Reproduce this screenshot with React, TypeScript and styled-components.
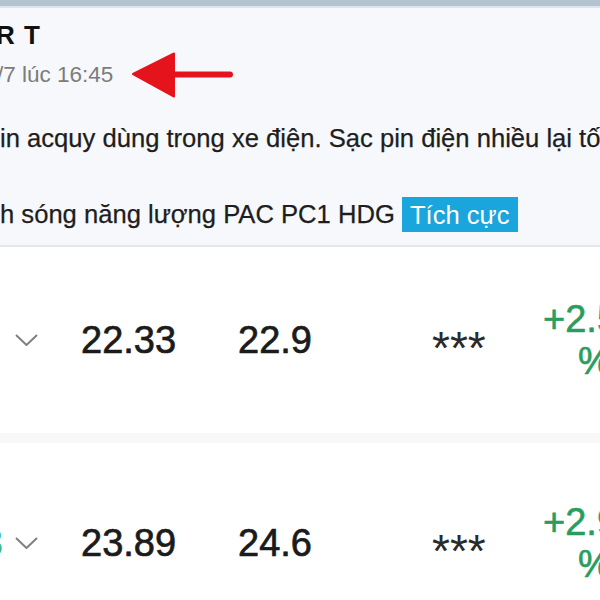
import React from "react";
import styled, { createGlobalStyle } from "styled-components";

const GlobalStyle = createGlobalStyle`
  html, body {
    margin: 0;
    padding: 0;
    background: #ffffff;
    overflow: hidden;
  }
  body {
    width: 600px;
    height: 600px;
    font-family: "Liberation Sans", Arial, sans-serif;
    color: #222222;
  }
`;

const Page = styled.div`
  width: 600px;
  height: 600px;
  overflow: hidden;
`;

const TopStrip = styled.div`
  height: 6px;
  background: #b3c3cf;
  border-bottom: 2px solid #dde5ec;
`;

const NewsPanel = styled.section`
  background: #f6f8fb;
  padding: 12px 0 12px 0;
  border-bottom: 2px solid #e3e7eb;
`;

const Author = styled.div`
  margin-left: -4px;
  font-size: 26px;
  line-height: 30px;
  font-weight: 700;
  letter-spacing: 1px;
  color: #111111;
  white-space: nowrap;
`;

const MetaRow = styled.div`
  display: flex;
  align-items: center;
  gap: 18px;
  margin-top: 2px;
`;

const Time = styled.span`
  margin-left: -3px;
  font-size: 22.5px;
  color: #7c7c7c;
  white-space: nowrap;
`;

const Body = styled.p`
  margin: 0;
  font-size: 25.6px;
  line-height: 38px;
  color: #1e1e1e;
  white-space: nowrap;
  overflow: hidden;
  -webkit-text-stroke: 0.25px #1e1e1e;

  & + & {
    margin-top: 38px;
  }
`;

const BodyFirst = styled(Body)`
  margin-top: 21px;
`;

const Tag = styled.span`
  background: #1aa6dc;
  color: #ffffff;
  -webkit-text-stroke: 0;
  padding: 3.5px 8px;
`;

const Row = styled.div<{ $height: number; $divider?: boolean }>`
  display: grid;
  grid-template-columns: 15px 66px 157px 194px 98px 130px;
  align-items: center;
  height: ${(p) => p.$height}px;
  border-bottom: ${(p) => (p.$divider ? "10px solid #f8f8f8" : "none")};
`;

const SymbolCell = styled.div`
  font-size: 38px;
  color: #3fb37a;
  white-space: nowrap;

  span {
    margin-left: -18px;
  }
`;

const ChevronCell = styled.div`
  display: flex;
  align-items: center;
  height: 12px;
`;

const Price = styled.div`
  font-size: 38px;
  line-height: 44px;
  color: #1b1b1b;
  white-space: nowrap;
  -webkit-text-stroke: 0.7px #1b1b1b;
`;

const Stars = styled.div`
  margin-top: 16px;
  font-size: 46px;
  line-height: 50px;
  color: #2a2a2a;
  white-space: nowrap;
`;

const Change = styled.div`
  padding-left: 13px;
  font-size: 38px;
  line-height: 42px;
  color: #2a9d5e;
  white-space: nowrap;
  -webkit-text-stroke: 0.6px #2a9d5e;

  span {
    display: block;
  }

  span + span {
    padding-left: 35px;
  }
`;

const Arrow = () => (
  <svg width="102" height="46" viewBox="0 0 102 46">
    <polygon
      points="2,22 43,1.5 43,44.5"
      fill="#e5141c"
      stroke="#e5141c"
      strokeWidth="2"
      strokeLinejoin="round"
    />
    <line
      x1="42"
      y1="22.5"
      x2="99"
      y2="22.5"
      stroke="#e5141c"
      strokeWidth="6"
      strokeLinecap="round"
    />
  </svg>
);

const Chevron = () => (
  <svg width="23" height="12" viewBox="0 0 23 12">
    <polyline
      points="1,1 11.5,11 22,1"
      fill="none"
      stroke="#808080"
      strokeWidth="2"
    />
  </svg>
);

type Quote = {
  symbol: string;
  ref: string;
  ceil: string;
  change: string;
  height: number;
  divider?: boolean;
};

const quotes: Quote[] = [
  { symbol: "", ref: "22.33", ceil: "22.9", change: "+2.59", height: 186, divider: true },
  { symbol: "3", ref: "23.89", ceil: "24.6", change: "+2.97", height: 200 },
];

export default function App() {
  return (
    <Page>
      <GlobalStyle />
      <TopStrip />
      <NewsPanel>
        <Author>R T</Author>
        <MetaRow>
          <Time>/7 lúc 16:45</Time>
          <Arrow />
        </MetaRow>
        <BodyFirst>
          in acquy dùng trong xe điện. Sạc pin điện nhiều lại tốt
        </BodyFirst>
        <Body>
          h sóng năng lượng PAC PC1 HDG <Tag>Tích cực</Tag>
        </Body>
      </NewsPanel>
      {quotes.map((q) => (
        <Row key={q.ref} $height={q.height} $divider={q.divider}>
          <SymbolCell>
            <span>{q.symbol}</span>
          </SymbolCell>
          <ChevronCell>
            <Chevron />
          </ChevronCell>
          <Price>{q.ref}</Price>
          <Price>{q.ceil}</Price>
          <Stars>***</Stars>
          <Change>
            <span>{q.change}</span>
            <span>%</span>
          </Change>
        </Row>
      ))}
    </Page>
  );
}
